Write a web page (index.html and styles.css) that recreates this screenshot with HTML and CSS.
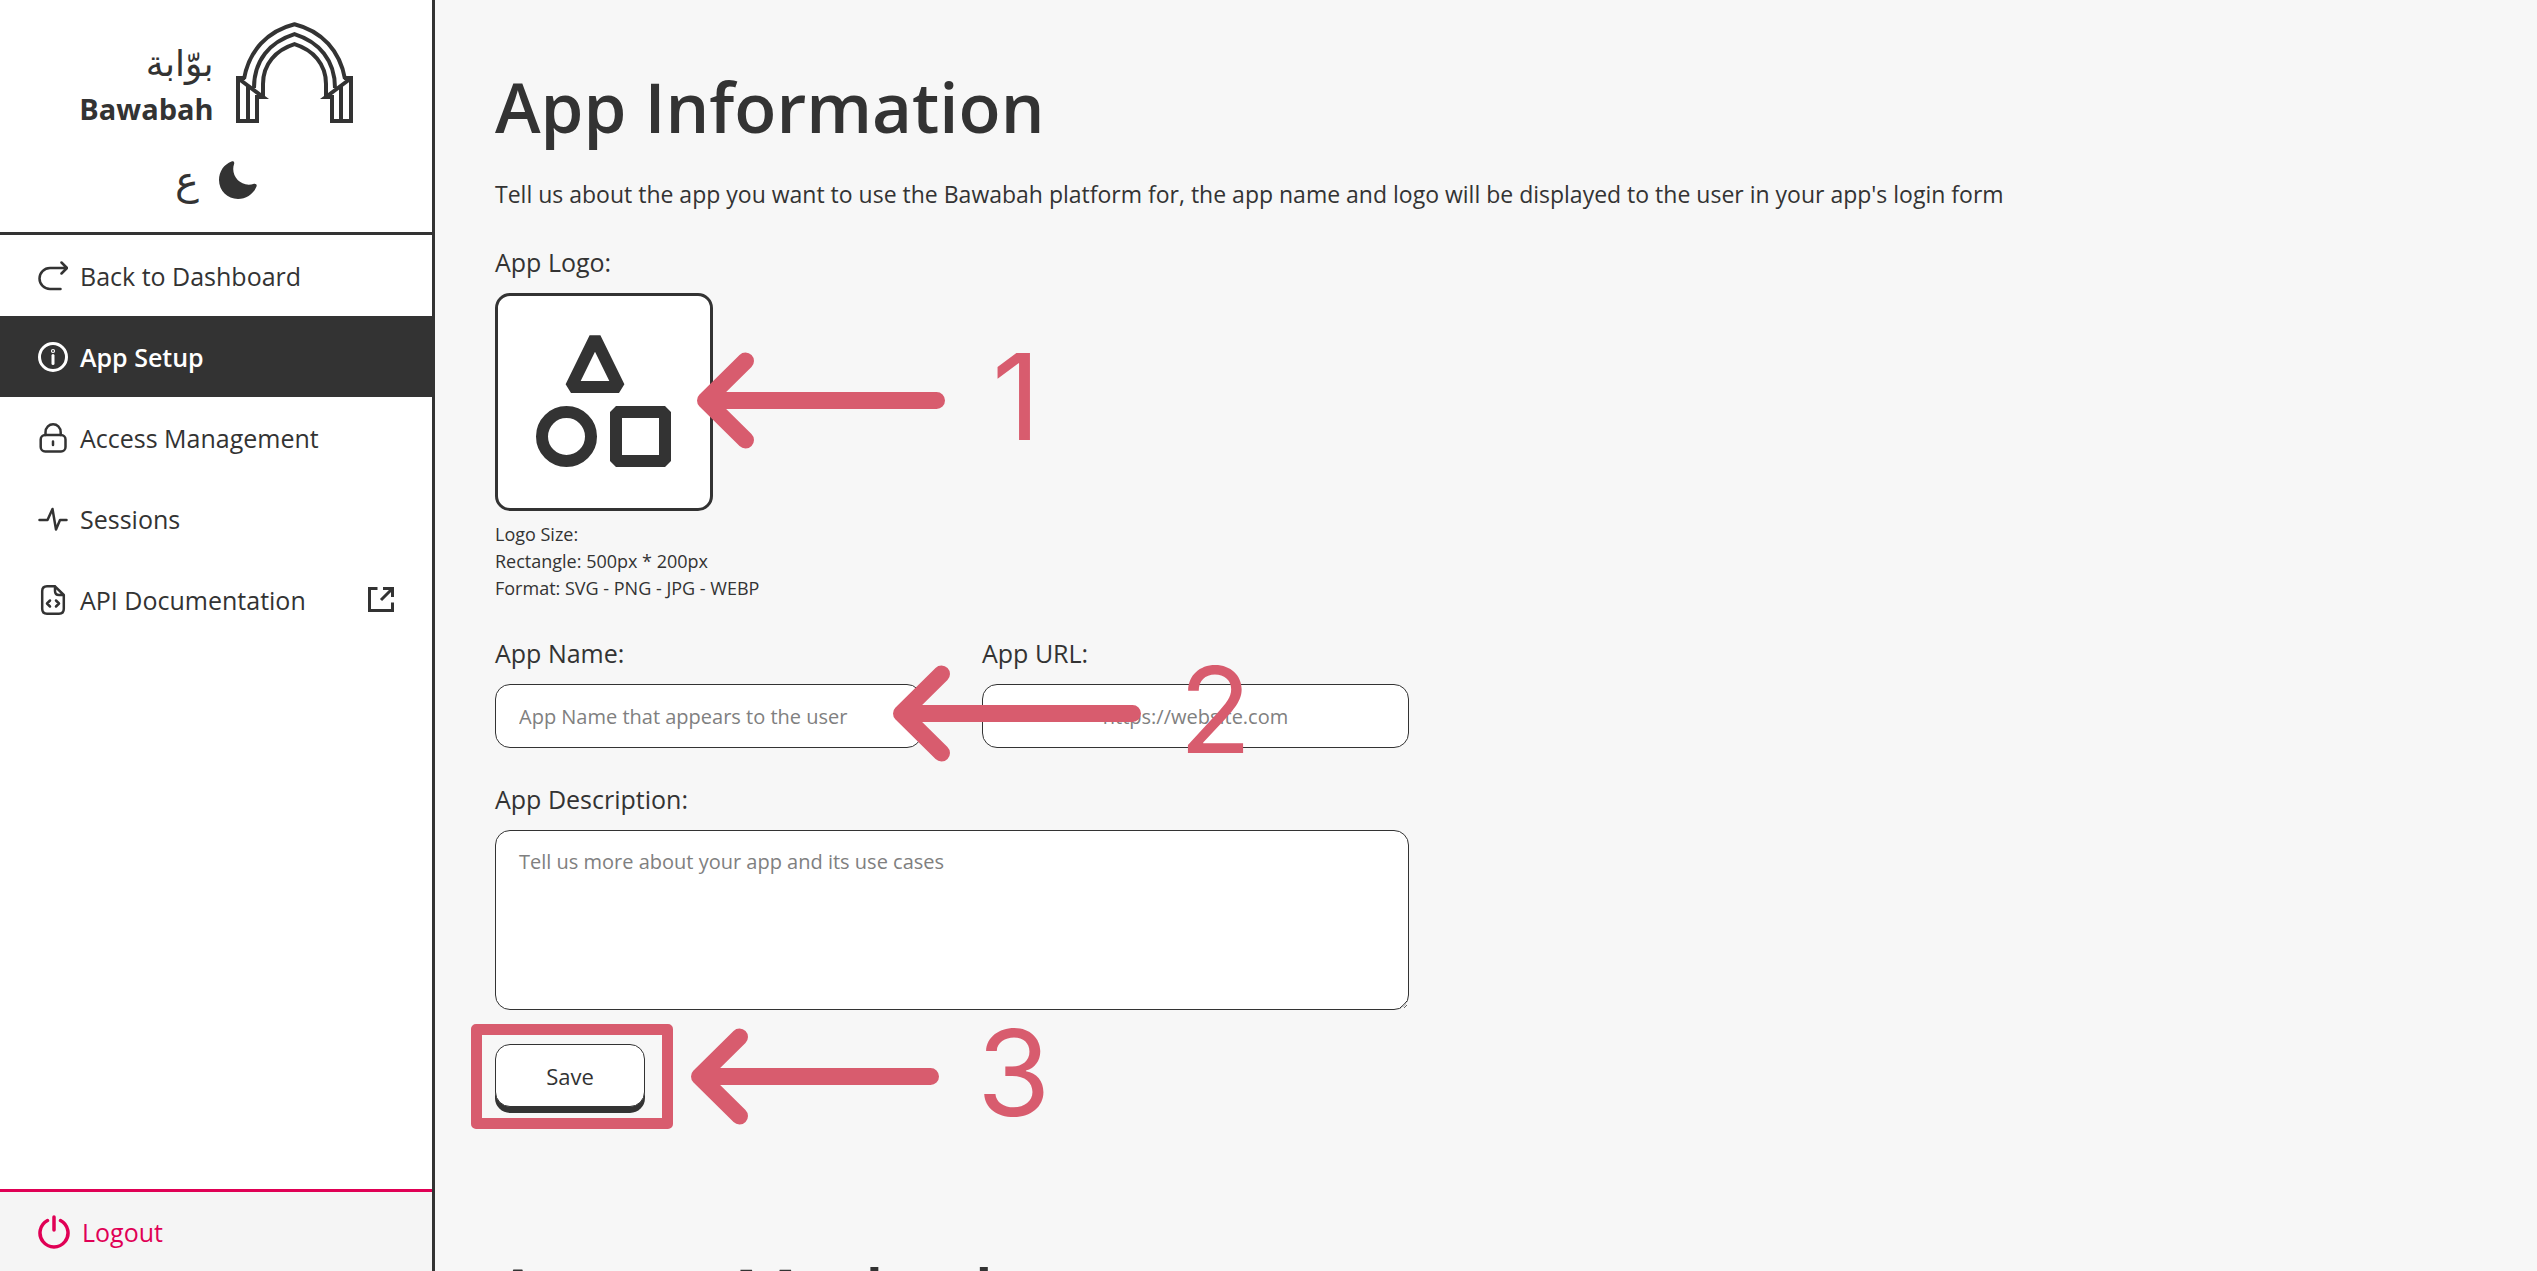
FILE: index.html
```html
<!DOCTYPE html>
<html lang="en">
<head>
<meta charset="utf-8">
<meta name="viewport" content="width=device-width, initial-scale=1">
<title>Bawabah – App Setup</title>
<link rel="stylesheet" href="styles.css">
</head>
<body>
<svg class="sprite" aria-hidden="true">
  <symbol id="arrow" viewBox="0 0 248 97">
    <path d="M8.500 48.500H239.500M48.500 9L8.500 48.500L48.500 88" fill="none" stroke="currentColor" stroke-width="17" stroke-linecap="round" stroke-linejoin="round"/>
  </symbol>
</svg>
<div class="layout">
  <aside class="sidebar">
    <header class="sidebar-head">
      <div class="brand">
        <div class="brand-text">
          <span class="brand-ar" lang="ar" dir="rtl">بوّابة</span>
          <span class="brand-en">Bawabah</span>
        </div>
        <svg class="brand-arch" viewBox="0 0 117 101" fill="none" stroke="currentColor" stroke-width="4" aria-hidden="true">
          <path d="M8 57C13 29 31 9 58.500 2.200C86 9 104 29 109 57"/>
          <path d="M18 66C18 38 34 20 58.500 12.200C83 20 99 38 99 66"/>
          <path d="M27 75V62C27 42 40 28 58.500 22.200C77 28 90 42 90 62V75"/>
          <path d="M9 56H2V99H21V75H27L3 57M12 64V99"/>
          <path d="M108 56H115V99H96V75H90L114 57M105 64V99"/>
        </svg>
      </div>
      <div class="prefs">
        <button class="lang" type="button" lang="ar" aria-label="Arabic">ع</button>
        <button class="theme" type="button" aria-label="Dark mode">
          <svg viewBox="0 0 38 38" fill="currentColor"><path d="M12.500 .5C14.500 -.2 15.600 1 15.100 2.900C11 15 22 27 35 22.800C37 22.400 38.200 23.800 37.500 25.600C34.500 33 27 38 19 38C8.500 38 0 29.500 0 19C0 10.500 5 3.300 12.500 .5Z"/></svg>
        </button>
      </div>
    </header>
    <nav class="menu">
      <a href="#dashboard">
        <svg viewBox="0 0 30 30"><path d="M28 7H12A10.500 10.500 0 0 0 12 28H22.500M23.500 1.500L29 7L23.500 12.500"/></svg>
        Back to Dashboard
      </a>
      <a class="active" href="#setup">
        <svg viewBox="0 0 30 30"><circle cx="15" cy="15" r="13.500"/><path d="M15 13.500V21.500"/><circle cx="15" cy="9" r=".6"/></svg>
        App Setup
      </a>
      <a href="#access">
        <svg viewBox="0 0 30 30"><rect x="2.700" y="12" width="24.800" height="16.500" rx="4.500"/><path d="M7.500 12V9.500C7.500 -1.500 22.700 -1.500 22.700 9.500V12M15 18.500V22"/></svg>
        Access Management
      </a>
      <a href="#sessions">
        <svg viewBox="0 0 30 30"><path d="M1.500 16H9.500L14.500 5L18 25.500L22 16H28.500"/></svg>
        Sessions
      </a>
      <a href="#docs">
        <svg viewBox="0 0 30 30"><path d="M17 1.300H9Q4.200 1.300 4.200 6.300V23.700Q4.200 28.700 9 28.700H21Q25.800 28.700 25.800 23.700V10ZM17 1.300V6Q17 10 21 10H25.800M12 15.500L9 18.500L12 21.500M18 15.500L21 18.500L18 21.500"/></svg>
        API Documentation
        <svg class="external" viewBox="0 0 26 26"><path d="M9.500 1.500H1.500V23.500H24.500V15.500M13 13L24 2M15 1.500H24.500V10"/></svg>
      </a>
    </nav>
    <a class="logout" href="#logout">
      <svg viewBox="0 0 32 34"><path d="M9.500 5.500A14 14 0 1 0 22.500 5.500M16 2V15"/></svg>
      Logout
    </a>
  </aside>

  <main class="content">
    <h1>App Information</h1>
    <p class="lead">Tell us about the app you want to use the Bawabah platform for, the app name and logo will be displayed to the user in your app's login form</p>

    <form class="form">
      <div class="field">
        <label for="logo">App Logo:</label>
        <div class="logo-wrap">
          <button class="logo-box" id="logo" type="button" aria-label="Upload app logo">
            <svg viewBox="0 0 212 212" fill="none" stroke="currentColor" stroke-width="12" stroke-linejoin="bevel">
              <path d="M97 42L121 91H73Z"/><circle cx="68.500" cy="140.500" r="24.500"/><rect x="118" y="116" width="49" height="49"/>
            </svg>
          </button>
          <div class="step step-logo"><svg><use href="#arrow"/></svg><span>1</span></div>
        </div>
        <p class="hint">Logo Size:<br>Rectangle: 500px * 200px<br>Format: SVG - PNG - JPG - WEBP</p>
      </div>

      <div class="row">
        <div class="field">
          <label for="name">App Name:</label>
          <input id="name" type="text" placeholder="App Name that appears to the user">
          <div class="step step-name"><svg><use href="#arrow"/></svg><span>2</span></div>
        </div>
        <div class="field">
          <label for="url">App URL:</label>
          <input class="url" id="url" type="url" placeholder="https://website.com">
        </div>
      </div>

      <div class="field">
        <label for="description">App Description:</label>
        <textarea id="description" placeholder="Tell us more about your app and its use cases"></textarea>
      </div>

      <div class="actions">
        <button class="save" type="submit">Save</button>
        <div class="frame"></div>
        <div class="step step-save"><svg><use href="#arrow"/></svg><span>3</span></div>
      </div>
    </form>

    <h2>Access Methods</h2>
  </main>
</div>
</body>
</html>
```
FILE: styles.css
```css
:root {
  --ink: #333333;
  --page: #f7f7f7;
  --danger: #e00055;
  --mark: #d85c6e;
}

* { box-sizing: border-box; }

body {
  margin: 0;
  background: var(--page);
  color: var(--ink);
  font-family: "Open Sans", "Noto Sans", sans-serif;
  font-size: 25px;
  line-height: 34px;
}

h1, h2, p { margin: 0; }
a { color: inherit; text-decoration: none; }
svg { display: block; }
button, input, textarea { font: inherit; color: inherit; }
.sprite { position: absolute; width: 0; height: 0; }

.layout {
  display: grid;
  grid-template-columns: 435px 1fr;
  height: 100vh;
}

/* Sidebar */
.sidebar {
  display: flex;
  flex-direction: column;
  background: #ffffff;
  border-right: 3px solid var(--ink);
}

.sidebar-head {
  display: flex;
  flex-direction: column;
  align-items: center;
  gap: 38px;
  padding: 22px 0 33px;
  border-bottom: 3px solid var(--ink);
}

.brand { display: flex; align-items: center; gap: 22px; }
.brand-arch { width: 117px; height: 101px; }

.brand-text {
  display: flex;
  flex-direction: column;
  align-items: flex-end;
  gap: 8px;
  padding-top: 20px;
}

.brand-ar {
  font-family: "DejaVu Sans", sans-serif;
  font-size: 36px;
  line-height: 44px;
}

.brand-en { font-size: 29px; font-weight: 700; line-height: 29px; }

.prefs { display: flex; align-items: center; gap: 20px; height: 38px; }
.prefs button { padding: 0; border: 0; background: none; }
.theme svg { width: 38px; height: 38px; }

.prefs .lang {
  font-family: "DejaVu Sans", sans-serif;
  font-size: 40px;
  line-height: 38px;
}

.menu { flex: 1; font-weight: 500; }

.menu a, .logout {
  display: flex;
  align-items: center;
  gap: 12px;
  padding: 0 38px;
}

.menu a { height: 81px; }
.menu .active { background: var(--ink); color: #ffffff; font-weight: 600; }

.menu svg, .logout svg {
  flex: none;
  width: 30px;
  height: 30px;
  fill: none;
  stroke: currentColor;
  stroke-width: 2.5;
  stroke-linecap: round;
  stroke-linejoin: round;
}

.menu .active svg { stroke-width: 3; }

.menu .external {
  width: 26px;
  height: 26px;
  margin-left: auto;
  stroke-width: 3;
  stroke-linecap: butt;
  stroke-linejoin: miter;
}

.logout {
  height: 82px;
  background: #f5f5f5;
  border-top: 3px solid var(--danger);
  color: var(--danger);
  font-weight: 500;
}

.logout svg { width: 32px; height: 34px; stroke-width: 3.5; }

/* Content */
.content { overflow: hidden; padding: 60px; }

h1, h2 { font-size: 69px; font-weight: 600; line-height: 92px; }
h2 { margin-top: 133px; }

.lead {
  margin-top: 24px;
  font-size: 23px;
  font-weight: 400;
  line-height: 36px;
}

.form {
  display: flex;
  flex-direction: column;
  gap: 34px;
  max-width: 914px;
  margin-top: 33px;
}

.row { display: grid; grid-template-columns: 1fr 1fr; gap: 60px; }
.field { position: relative; display: flex; flex-direction: column; gap: 14px; }
label { font-weight: 500; }

.logo-wrap { position: relative; width: 218px; }

.logo-box {
  display: block;
  width: 218px;
  padding: 0;
  background: #ffffff;
  border: 3px solid var(--ink);
  border-radius: 15px;
}

.hint { margin-top: -4px; font-size: 18px; line-height: 27px; }

input, textarea {
  width: 100%;
  padding: 0 23px;
  background: #ffffff;
  border: 1px solid var(--ink);
  border-radius: 15px;
  font-size: 20px;
  font-weight: 500;
}

input { height: 64px; }
textarea { display: block; height: 180px; padding: 17px 23px; line-height: 28px; }
.url { text-align: center; }
::placeholder { color: #808080; opacity: 1; }

.actions { position: relative; width: 150px; padding-bottom: 6px; }

.save {
  display: block;
  width: 100%;
  height: 63px;
  padding: 0;
  background: #ffffff;
  border: 1px solid var(--ink);
  border-radius: 15px;
  box-shadow: 0 6px 0 var(--ink);
  font-size: 22px;
  font-weight: 500;
}

/* Guide marks laid over the form */
.frame {
  position: absolute;
  inset: -20px -28px -16px -24px;
  border: 11px solid var(--mark);
  border-radius: 5px;
  pointer-events: none;
}

.step {
  position: absolute;
  z-index: 1;
  display: flex;
  align-items: center;
  gap: 38px;
  height: 97px;
  color: var(--mark);
  pointer-events: none;
}

.step svg { flex: none; width: 248px; height: 97px; }

.step span {
  padding-bottom: 8px;
  font-family: Inter, sans-serif;
  font-size: 119px;
  line-height: 120px;
}

.step-logo { left: 202px; top: 59px; gap: 47px; }
.step-name { left: 398px; bottom: -14px; }
.step-save { left: 196px; top: -16px; }
```
